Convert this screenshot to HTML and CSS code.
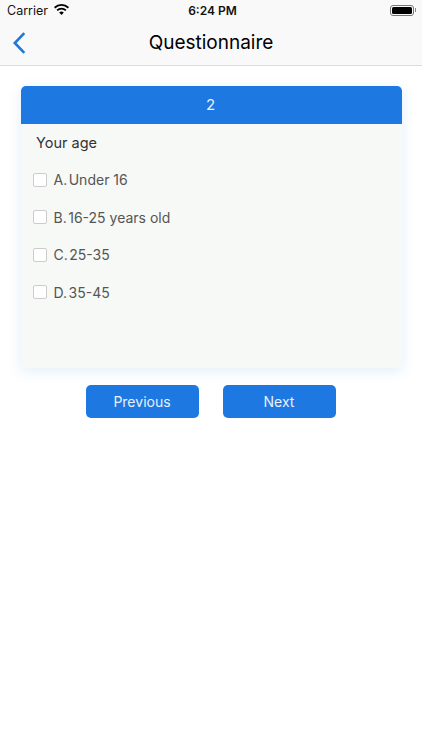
FILE: index.html
```html
<!DOCTYPE html>
<html lang="en">
<head>
<meta charset="utf-8">
<title>Questionnaire</title>
<link rel="stylesheet" href="styles.css">
</head>
<body>
<header class="topbar">
  <div class="status">
    <div class="status-left">
      <span>Carrier</span>
      <svg class="wifi" width="15" height="11" viewBox="0 0 15 11"><path d="M7.5 11 5.2 8.5a3.3 3.3 0 0 1 4.6 0Z" fill="#000"/><path d="M3.7 7a5.4 5.4 0 0 1 7.6 0l1.2-1.3a7.2 7.2 0 0 0-10 0Z" fill="#000"/><path d="M1.2 4.4a9 9 0 0 1 12.6 0L15 3.1a10.8 10.8 0 0 0-15 0Z" fill="#000"/></svg>
    </div>
    <span class="time">6:24 PM</span>
    <div class="battery"><span class="battery-body"><span class="battery-fill"></span></span><span class="battery-tip"></span></div>
  </div>
  <div class="nav">
    <svg class="back" width="14" height="22" viewBox="0 0 14 22"><path d="M12.3 1.2 2.8 11l9.5 9.8" fill="none" stroke="#2079d8" stroke-width="2.6"/></svg>
    <h1>Questionnaire</h1>
  </div>
</header>
<main class="content">
  <section class="card">
    <div class="card-head">2</div>
    <div class="card-body">
      <p class="question">Your age</p>
      <label class="option"><span class="box"></span><span class="key">A.</span><span>Under 16</span></label>
      <label class="option"><span class="box"></span><span class="key">B.</span><span>16-25 years old</span></label>
      <label class="option"><span class="box"></span><span class="key">C.</span><span>25-35</span></label>
      <label class="option"><span class="box"></span><span class="key">D.</span><span>35-45</span></label>
    </div>
  </section>
  <div class="actions">
    <button class="btn">Previous</button>
    <button class="btn">Next</button>
  </div>
</main>
</body>
</html>
```
FILE: styles.css
```css
* { box-sizing: border-box; }
html, body { margin: 0; padding: 0; }
body { width: 422px; height: 750px; background: #fff; font-family: Inter, "Liberation Sans", sans-serif; overflow: hidden; }
.topbar { height: 66px; background: #f9f9f9; border-bottom: 1px solid #dcdcdc; }
.status { height: 20px; padding: 0 6px 0 7px; display: grid; grid-template-columns: 1fr auto 1fr; align-items: center; font-size: 12.5px; color: #111; }
.status-left { display: flex; align-items: center; gap: 6px; }
.wifi { margin-top: -2px; }
.time { font-weight: 600; font-size: 12px; position: relative; left: 1px; }
.battery { justify-self: end; display: flex; align-items: center; }
.battery-body { width: 24px; height: 11px; border: 1px solid #777; border-radius: 3px; padding: 1px; display: flex; }
.battery-fill { flex: 1; background: #000; border-radius: 1.5px; }
.battery-tip { width: 1.5px; height: 4px; background: #888; margin-left: 0.5px; }
.nav { height: 45px; position: relative; display: flex; align-items: center; justify-content: center; }
.nav h1 { margin: 0; font-size: 19px; font-weight: 400; color: #000; }
.back { position: absolute; left: 12px; top: 12px; }
.content { padding: 20px 20.5px 0 20.5px; }
.card { box-shadow: 0 3px 14px rgba(32,121,216,.13); border-radius: 5px 5px 0 0; }
.card-head { height: 37.5px; background: #1d78e2; color: #e8f1fc; border-radius: 5px 5px 0 0; display: flex; align-items: center; justify-content: center; font-size: 15px; padding-bottom: 1px; padding-right: 1px; }
.card-body { height: 244.5px; background: #f7f9f7; padding: 9.5px 12px 0 12px; }
.question { margin: 0 0 0 3.5px; height: 20px; line-height: 20px; font-size: 14.5px; color: #333; }
.option { height: 37.5px; display: flex; align-items: center; font-size: 14px; color: #555; }
.question + .option { margin-top: 8px; }
.box { width: 14px; height: 14px; background: #fff; border: 1px solid #ccc; border-radius: 2px; margin-right: 7px; flex: none; }
.key { margin-right: 1.5px; }
.actions { display: flex; justify-content: center; gap: 24px; margin-top: 16.5px; padding-right: 1px; }
.btn { width: 113px; height: 33px; background: #1d78e2; color: #e8f1fc; border: 0; border-radius: 5px; font: inherit; font-size: 14px; padding: 0; }
```
